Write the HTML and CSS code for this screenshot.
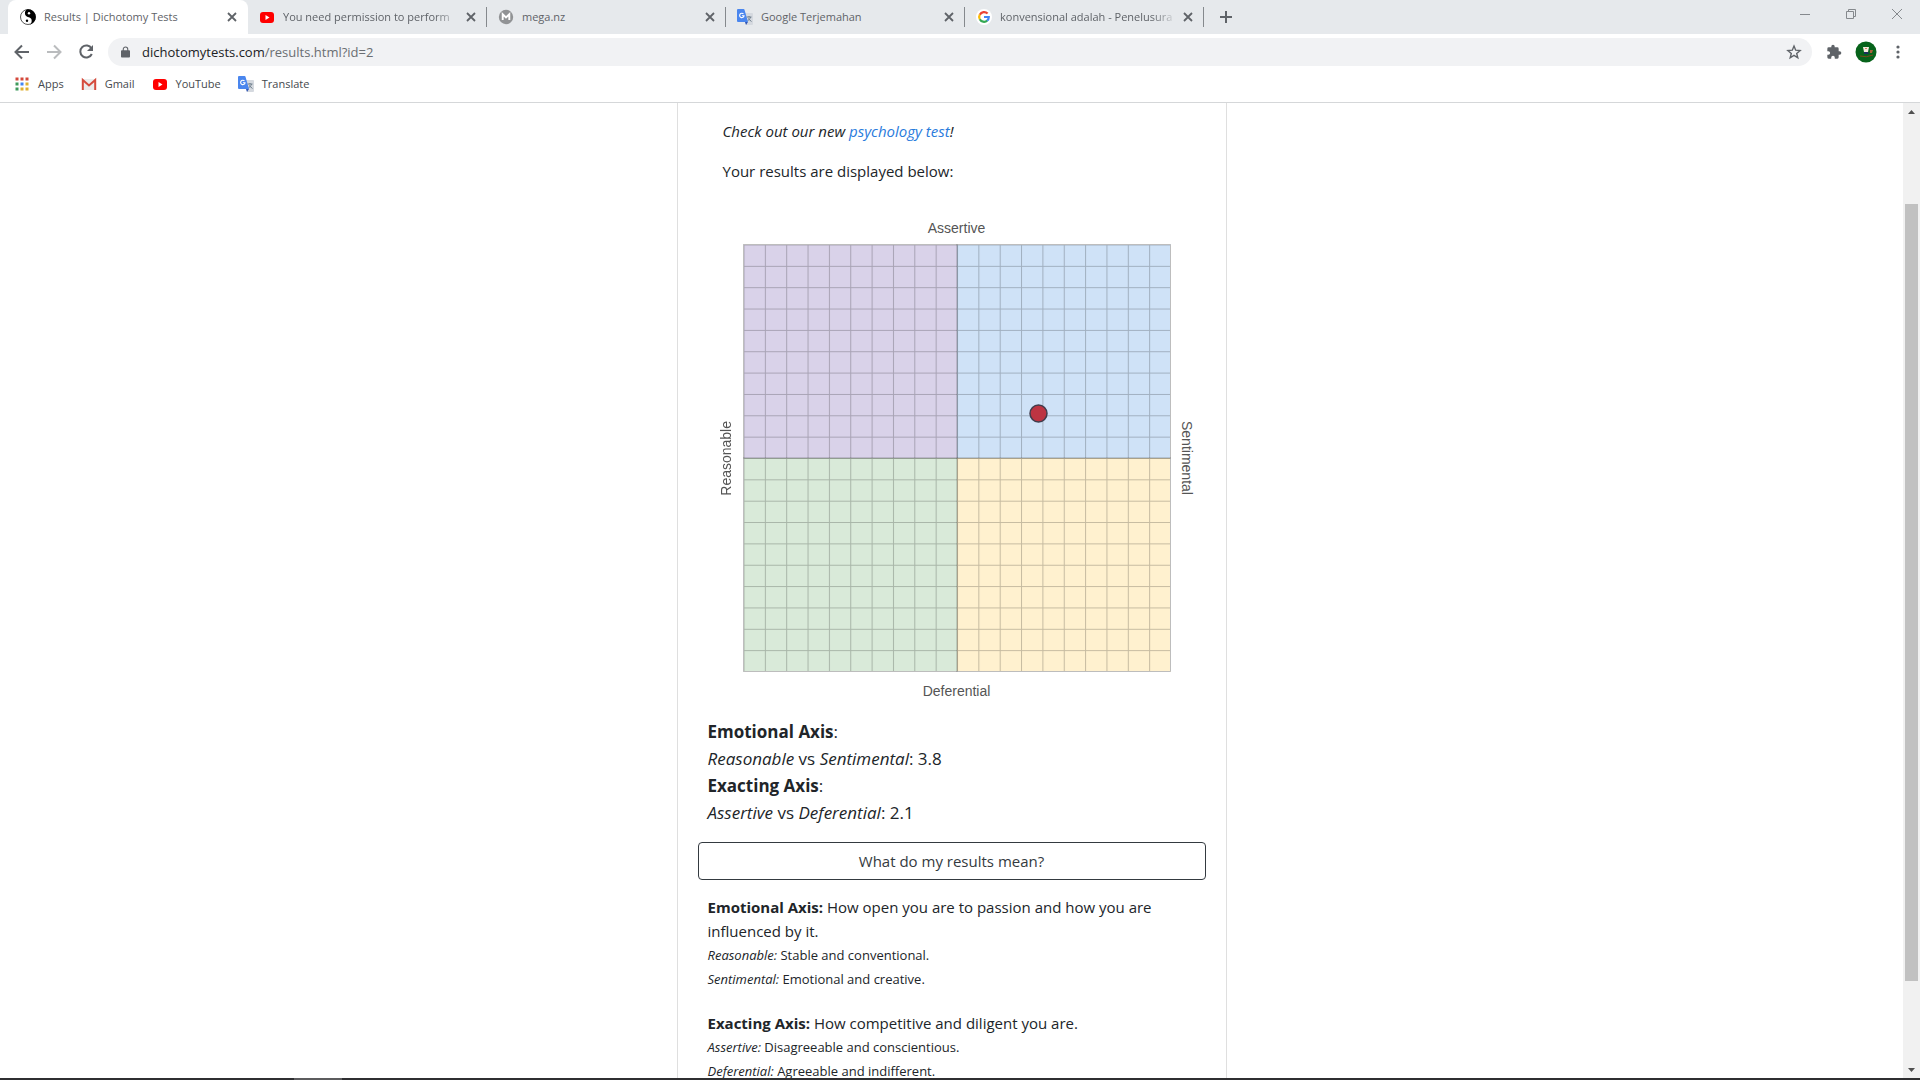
FILE: index.html
```html
<!DOCTYPE html>
<html lang="en">
<head>
<meta charset="utf-8">
<title>Results | Dichotomy Tests</title>
<link rel="stylesheet" href="styles.css">
</head>
<body>
<svg class="sprite" aria-hidden="true">
  <symbol id="close" viewBox="0 0 10 10"><path d="M1 1l8 8M9 1L1 9" fill="none" stroke="#5f6368" stroke-width="1.8"/></symbol>
  <symbol id="youtube" viewBox="0 0 16 16"><rect x="1" y="3" width="14" height="11" rx="3" fill="#f00"/><path d="M6.500 6v5l4-2.500z" fill="#fff"/></symbol>
  <symbol id="translate" viewBox="0 0 16 16"><path d="M6 4h9a1 1 0 0 1 1 1v10a1 1 0 0 1-1 1H9z" fill="#d5d9df"/><path d="M9.500 8h5M12 7v1M13.500 8c-.5 2-2 3.500-3 4M11 9.500l3.500 3" stroke="#6f7f8c" fill="none"/><path d="M8 13h3l-2 3z" fill="#2f55b5"/><path d="M1 0h5.500a1 1 0 0 1 1 .8L11 13H1a1 1 0 0 1-1-1V1a1 1 0 0 1 1-1z" fill="#4a86ee"/><path d="M6.500 5A2.200 2.200 0 1 0 7 6.800H4.900" fill="none" stroke="#fff" stroke-width="1.100"/></symbol>
</svg>

<header class="browser">
  <div class="tabs">
    <div class="tab active">
      <svg class="fav" viewBox="0 0 16 16"><circle cx="8" cy="8" r="7.500" fill="#fff" stroke="#111" stroke-width=".7"/><path d="M8 .2a7.800 7.800 0 0 1 0 15.600 3.900 3.900 0 0 0 1-7.600A3.900 3.900 0 0 1 5 3.500C5 1.700 6.500.4 8 .2z" fill="#000"/><circle cx="9" cy="4.300" r="1.200" fill="#fff"/><circle cx="7" cy="11.800" r="1.200"/></svg>
      <span class="title">Results | Dichotomy Tests</span>
      <button class="x" aria-label="Close tab"><svg><use href="#close"/></svg></button>
    </div>
    <div class="tab">
      <svg class="fav"><use href="#youtube"/></svg>
      <span class="title fade">You need permission to perform</span>
      <button class="x" aria-label="Close tab"><svg><use href="#close"/></svg></button>
    </div>
    <div class="tab">
      <svg class="fav" viewBox="0 0 16 16"><circle cx="8" cy="8" r="7.200" fill="#919395"/><path d="M4.700 11V5.300L8 8.500l3.300-3.200V11" fill="none" stroke="#fff" stroke-width="1.900"/></svg>
      <span class="title">mega.nz</span>
      <button class="x" aria-label="Close tab"><svg><use href="#close"/></svg></button>
    </div>
    <div class="tab">
      <svg class="fav"><use href="#translate"/></svg>
      <span class="title">Google Terjemahan</span>
      <button class="x" aria-label="Close tab"><svg><use href="#close"/></svg></button>
    </div>
    <div class="tab">
      <svg class="fav" viewBox="0 0 16 16"><circle cx="8" cy="8" r="8" fill="#fff"/><g fill="none" stroke-width="2.200"><path d="M11.600 4.600A4.800 4.800 0 0 0 3.800 5.700" stroke="#ea4335"/><path d="M3.800 5.600a4.800 4.800 0 0 0 0 4.700" stroke="#fbbc05"/><path d="M3.800 10.200a4.800 4.800 0 0 0 7.400 1.400" stroke="#34a853"/><path d="M11.100 11.700A4.800 4.800 0 0 0 12.800 8H8" stroke="#4285f4"/></g></svg>
      <span class="title fade">konvensional adalah - Penelusura</span>
      <button class="x" aria-label="Close tab"><svg><use href="#close"/></svg></button>
    </div>
    <button class="new-tab" aria-label="New tab"><svg viewBox="0 0 12 12"><path d="M6 0v12M0 6h12" stroke="#5f6368" stroke-width="2"/></svg></button>
    <div class="window-buttons">
      <button aria-label="Minimize"><svg viewBox="0 0 12 12"><path d="M1 6.500h10" stroke="#85898d"/></svg></button>
      <button aria-label="Restore"><svg viewBox="0 0 12 12"><path d="M1.500 3.500h7v7h-7zM3.500 3.500v-2h7v7h-2" fill="none" stroke="#85898d"/></svg></button>
      <button aria-label="Close"><svg viewBox="0 0 12 12"><path d="M1 1l10 10M11 1L1 11" stroke="#85898d"/></svg></button>
    </div>
  </div>

  <div class="toolbar">
    <button aria-label="Back"><svg viewBox="0 0 16 16"><path d="M15 8H2.500M8 1.500L1.500 8 8 14.500" fill="none" stroke="#5f6368" stroke-width="2"/></svg></button>
    <button aria-label="Forward"><svg viewBox="0 0 16 16"><path d="M1 8h12.500M8 1.500L14.500 8 8 14.500" fill="none" stroke="#babcbe" stroke-width="2"/></svg></button>
    <button aria-label="Reload"><svg viewBox="0 0 16 16"><path d="M13.500 4.500A6 6 0 1 0 13.800 10" fill="none" stroke="#5f6368" stroke-width="2"/><path d="M15 1v6H9z" fill="#5f6368"/></svg></button>
    <div class="address">
      <svg class="lock" viewBox="0 0 10 12"><path d="M1 4h8a1 1 0 0 1 1 1v6a1 1 0 0 1-1 1H1a1 1 0 0 1-1-1V5a1 1 0 0 1 1-1z" fill="#5f6368"/><path d="M2.500 5V3a2.500 2.500 0 0 1 5 0v2" fill="none" stroke="#5f6368" stroke-width="1.200"/></svg>
      <span class="url">dichotomytests.com<span>/results.html?id=2</span></span>
      <button class="star" aria-label="Bookmark"><svg viewBox="0 0 16 16"><path d="M8 2l1.700 4.200 4.400.3-3.400 2.900 1.100 4.400L8 11.400l-3.800 2.400 1.100-4.400L1.900 6.500l4.400-.3z" fill="none" stroke="#5f6368" stroke-width="1.400"/></svg></button>
    </div>
    <button class="ext" aria-label="Extensions"><svg viewBox="0 0 24 24"><path d="M20.500 11H19V7a2 2 0 0 0-2-2h-4V3.500a2.500 2.500 0 0 0-5 0V5H4a2 2 0 0 0-2 2v3.800h1.500a2.700 2.700 0 0 1 0 5.400H2V20a2 2 0 0 0 2 2h3.800v-1.500a2.700 2.700 0 0 1 5.400 0V22H17a2 2 0 0 0 2-2v-4h1.500a2.500 2.500 0 0 0 0-5z" fill="#5f6368"/></svg></button>
    <button class="avatar" aria-label="Profile"><svg viewBox="0 0 22 22"><circle cx="11" cy="11" r="10.500" fill="#07631b"/><path d="M8 6h6l-1 5H9z" fill="#f4ece0"/><path d="M10 7h2v1h-2z" fill="#d57b5c"/><path d="M9 11h4l1 2H9z" fill="#1c2f5c"/><path d="M15 9h3l-1 3h-2z" fill="#a8613a"/><path d="M5 15q6 2 13-1" fill="none" stroke="#7a4a1c" stroke-width="1"/></svg></button>
    <button class="more" aria-label="Menu"><svg viewBox="0 0 4 14"><circle cx="2" cy="2" r="1.600"/><circle cx="2" cy="7" r="1.600"/><circle cx="2" cy="12" r="1.600"/></svg></button>
  </div>

  <nav class="bookmarks">
    <a href="#"><svg viewBox="0 0 16 16"><path d="M1.500 1.500h3v3h-3zM6.500 1.500h3v3h-3zM11.500 1.500h3v3h-3z" fill="#d4483b"/><path d="M1.500 6.500h3v3h-3zM1.500 11.500h3v3h-3z" fill="#3f9a5c"/><path d="M6.500 6.500h3v3h-3z" fill="#4285f4"/><path d="M11.500 6.500h3v3h-3zM6.500 11.500h3v3h-3zM11.500 11.500h3v3h-3z" fill="#e0b030"/></svg>Apps</a>
    <a href="#"><svg viewBox="0 0 16 16"><path d="M2 3h12v11H2z" fill="#ececec"/><path d="M1.800 14V4L8 9.500 14.200 4v10" fill="none" stroke="#d54b3d" stroke-width="2"/></svg>Gmail</a>
    <a href="#"><svg><use href="#youtube"/></svg>YouTube</a>
    <a href="#"><svg><use href="#translate"/></svg>Translate</a>
  </nav>
</header>

<div class="viewport">
  <main class="page">
    <article class="card">
      <div class="intro">
        <p><em>Check out our new <a href="#">psychology test</a>!</em></p>
        <p>Your results are displayed below:</p>
      </div>
      <figure class="chart">
        <span class="top">Assertive</span>
        <span class="left">Reasonable</span>
        <svg class="plot" viewBox="0 0 428 428" role="img" aria-label="Result position">
          <defs>
            <pattern id="cells" width="21.350" height="21.350" patternUnits="userSpaceOnUse" x=".5" y=".5"><path d="M0 0H21.350M0 0V21.350" fill="none" stroke="#000" stroke-opacity=".45" stroke-width="2"/></pattern>
          </defs>
          <path d="M0 0h214v214H0z" fill="#d9d2e9"/>
          <path d="M214 0h214v214H214z" fill="#cfe2f7"/>
          <path d="M0 214h214v214H0z" fill="#d9ead9"/>
          <path d="M214 214h214v214H214z" fill="#fff1cf"/>
          <path d="M.5 .5h427v427H.5z" fill="url(#cells)" opacity=".5"/>
          <path d="M.5 .5h427v427H.5z" fill="none" stroke="#bdbdbd"/>
          <path d="M214 0v428M0 214h428" stroke="#000" stroke-opacity=".28" stroke-width="1"/>
          <circle cx="295.500" cy="169.500" r="8.500" fill="#bd3442" stroke="#413c4c" stroke-width="1.500"/>
        </svg>
        <span class="right">Sentimental</span>
        <span class="bottom">Deferential</span>
      </figure>
      <section class="scores">
        <div><b>Emotional Axis</b>:</div>
        <div><i>Reasonable</i> vs <i>Sentimental</i>: 3.8</div>
        <div><b>Exacting Axis</b>:</div>
        <div><i>Assertive</i> vs <i>Deferential</i>: 2.1</div>
      </section>
      <button class="explain">What do my results mean?</button>
      <section class="meaning">
        <p><b>Emotional Axis:</b> How open you are to passion and how you are influenced by it.</p>
        <p class="small"><i>Reasonable:</i> Stable and conventional.</p>
        <p class="small"><i>Sentimental:</i> Emotional and creative.</p>
      </section>
      <section class="meaning">
        <p><b>Exacting Axis:</b> How competitive and diligent you are.</p>
        <p class="small"><i>Assertive:</i> Disagreeable and conscientious.</p>
        <p class="small"><i>Deferential:</i> Agreeable and indifferent.</p>
      </section>
    </article>
  </main>
  <div class="scrollbar">
    <svg viewBox="0 0 17 17"><path d="M5 11h7L8.500 7z" fill="#505050"/></svg>
    <div class="before"></div>
    <div class="thumb"></div>
    <div class="after"></div>
    <svg viewBox="0 0 17 17"><path d="M5 7h7l-3.500 4z" fill="#505050"/></svg>
  </div>
</div>
<footer class="taskbar"><div class="task"></div></footer>
</body>
</html>
```
FILE: styles.css
```css
* { box-sizing: border-box; }
body {
  margin: 0;
  height: 100vh;
  display: flex;
  flex-direction: column;
  overflow: hidden;
  background: #fff;
  color: #212529;
  font-family: "Open Sans", "Noto Sans", sans-serif;
  font-size: 15px;
  line-height: 24px;
}
.sprite { display: none; }
svg { display: block; flex: none; }
p, figure { margin: 0; }
a { color: inherit; text-decoration: none; }
button {
  display: flex;
  align-items: center;
  justify-content: center;
  padding: 0;
  border: 0;
  background: none;
  color: inherit;
  font: inherit;
}

/* Tab strip */
.browser { flex: none; border-bottom: 1px solid #d5d7d9; font-size: 12px; }
.tabs {
  display: flex;
  height: 34px;
  padding-left: 8px;
  background: #e6e9ec;
  color: #5f6368;
}
.tab {
  position: relative;
  display: flex;
  align-items: center;
  flex: 0 1 239px;
  min-width: 0;
  padding: 0 10px 0 11px;
}
.tab.active { flex-basis: 240px; padding-left: 12px; background: #fff; border-radius: 8px 8px 0 0; }
.tab:not(.active)::after {
  content: "";
  position: absolute;
  right: 0;
  top: 7px;
  height: 20px;
  border-right: 1px solid #85898d;
}
.fav { width: 16px; height: 16px; margin-right: 8px; }
.title { flex: 1; overflow: hidden; white-space: nowrap; font-size: 11px; }
.fade { mask-image: linear-gradient(to right, #000 85%, transparent); }
.x { width: 12px; height: 16px; margin-left: 4px; }
.x svg { width: 10px; height: 10px; }
.new-tab { width: 44px; }
.new-tab svg { width: 12px; height: 12px; }
.window-buttons { display: flex; margin-left: auto; }
.window-buttons button { width: 46px; height: 28px; }
.window-buttons svg { width: 12px; height: 12px; }

/* Address row */
.toolbar { display: flex; align-items: center; height: 36px; padding: 0 6px; }
.toolbar > button { width: 32px; height: 28px; }
.toolbar svg { width: 16px; height: 16px; }
.address {
  display: flex;
  align-items: center;
  flex: 1;
  height: 28px;
  margin: 0 6px;
  padding: 0 10px 0 13px;
  border-radius: 14px;
  background: #f1f2f4;
}
.toolbar .lock { width: 9px; height: 12px; margin-right: 12px; }
.url { flex: 1; font-size: 13px; color: #202124; }
.url span { color: #6a6e72; }
.toolbar .avatar svg { width: 22px; height: 22px; }
.toolbar .more svg { width: 4px; height: 14px; fill: #5f6368; }

/* Bookmarks */
.bookmarks {
  display: flex;
  gap: 17px;
  height: 32px;
  padding: 0 0 4px 14px;
  color: #45494d;
  font-size: 11px;
}
.bookmarks a { display: flex; align-items: center; gap: 8px; }
.bookmarks svg { width: 16px; height: 16px; }

/* Page area */
.viewport { display: flex; flex: 1; min-height: 0; }
.page { flex: 1; overflow: hidden; }
.card {
  max-width: 550px;
  margin: 0 auto;
  padding: 16px 20px;
  border: 1px solid #dfdfdf;
  border-width: 0 1px;
}
.intro { padding: 0 25px; }
.intro p { margin-bottom: 16px; }
.intro a { color: #2a7bdc; }
.chart {
  display: grid;
  grid-template: 33px auto 38px / 33px minmax(0, 1fr) 33px;
  align-items: center;
  justify-items: center;
  margin: 28px 2px 0 12px;
  color: #555;
  font: 14px/16px "Liberation Sans", Arial, sans-serif;
}
.top { grid-area: 1 / 2; }
.left { grid-area: 2 / 1; writing-mode: vertical-rl; transform: rotate(180deg); }
.plot { grid-area: 2 / 2; width: 100%; height: auto; }
.right { grid-area: 2 / 3; writing-mode: vertical-rl; }
.bottom { grid-area: 3 / 2; }
.scores { margin-top: 8px; padding: 0 10px; font-size: 17px; line-height: 27px; }
.explain {
  width: 100%;
  height: 38px;
  margin: 16px 0 15px;
  border: 1px solid #343a40;
  border-radius: 4px;
  color: #343a40;
}
.meaning { margin-bottom: 20px; padding: 0 10px; }
.small { font-size: 13px; }

/* Scrollbar */
.scrollbar { display: flex; flex-direction: column; width: 17px; background: #f1f1f1; }
.scrollbar svg { width: 17px; height: 17px; }
.before { flex: 84; }
.thumb { flex: 777; margin: 0 2px; background: #c1c1c1; }
.after { flex: 80; }

.taskbar { flex: none; height: 2px; padding-left: 294px; background: #2f2f31; }
.task { width: 48px; height: 2px; background: #5c5c5e; }
```
